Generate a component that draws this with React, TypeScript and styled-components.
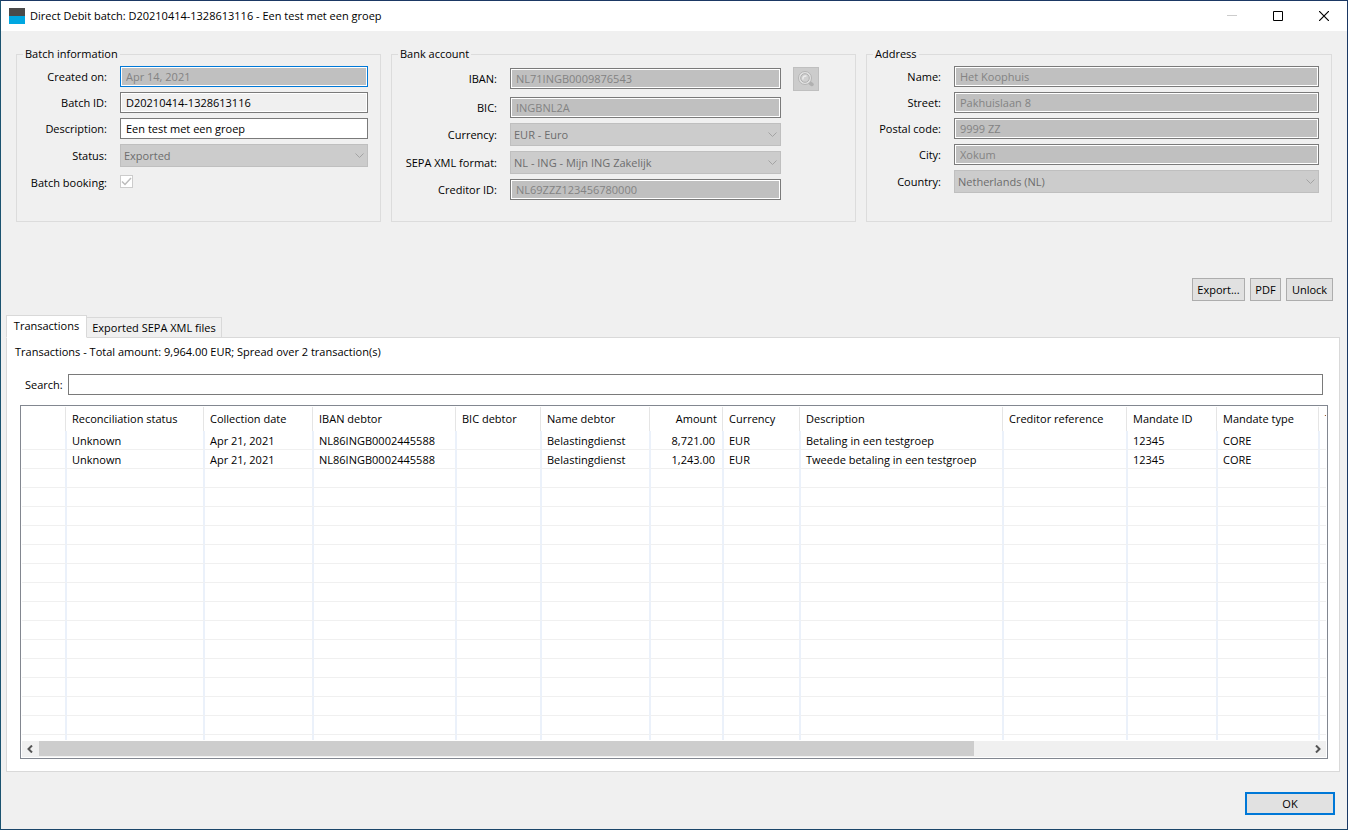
import React, { useId } from "react";
import styled, { createGlobalStyle } from "styled-components";

const GlobalStyle = createGlobalStyle`
  *, *::before, *::after { box-sizing: border-box; }
  body { margin: 0; }
  body, button, input, select {
    font-family: "Open Sans", "Noto Sans", sans-serif;
    font-size: 11px;
    line-height: 16px;
    color: #000;
  }
`;

const Window = styled.div`
  display: flex;
  flex-direction: column;
  height: 100vh;
  min-height: 560px;
  background: #f0f0f0;
  border: 1px solid #1b3864;
  border-left-color: #1b5370;
  border-bottom-color: #1b466a;
`;

const TitleBar = styled.header`
  display: flex;
  align-items: center;
  height: 30px;
  flex: none;
  padding-left: 8px;
  background: #fff;
`;

const Title = styled.h1`
  flex: 1;
  margin: 0 0 0 5px;
  font-size: 11px;
  font-weight: 400;
`;

const CaptionButton = styled.button`
  display: grid;
  place-items: center;
  width: 46px;
  height: 30px;
  padding: 0;
  border: 0;
  background: transparent;
`;

const Groups = styled.div`
  display: grid;
  grid-template-columns: 365fr 465fr 466fr;
  gap: 10px;
  flex: none;
  padding: 15px 15px 0;
`;

const Group = styled.fieldset`
  min-width: 0;
  min-height: 176px;
  margin: 0;
  padding: 4px 0 0;
  border: 1px solid #dcdcdc;
`;

const Legend = styled.legend`
  margin-left: 6px;
  padding: 0 2px;
`;

const Fields = styled.div<{ $label: number; $right: number }>`
  display: grid;
  grid-template-columns: ${(p) => p.$label}px minmax(0, 1fr);
  gap: 5px 13px;
  align-items: center;
  padding-right: ${(p) => p.$right}px;
`;

const FieldLabel = styled.label`
  text-align: right;
  white-space: nowrap;
`;

const TextInput = styled.input<{ $focus?: boolean }>`
  width: 100%;
  min-width: 0;
  height: 21px;
  padding: 0 5px;
  border: 1px solid ${(p) => (p.$focus ? "#0078d7" : "#7a7a7a")};
  border-radius: 0;
  box-shadow: inset 0 0 0 1px #fff;
  background: #fff;
  outline: 0;
  &:read-only { background: #f0f0f0; }
  &:disabled { background: #c0c0c0; color: #838383; }
`;

const SelectBox = styled.div`
  display: grid;
  align-items: center;
  & > * { grid-area: 1 / 1; }
  & > svg { justify-self: end; margin-right: 4px; pointer-events: none; }
`;

const SelectInput = styled.select`
  appearance: none;
  width: 100%;
  height: 23px;
  padding: 0 20px 0 3px;
  border: 1px solid #bfbfbf;
  border-radius: 0;
  background: #ccc;
  &:disabled { color: #6d6d6d; opacity: 1; }
`;

const CheckCell = styled.div`
  display: grid;
  align-items: start;
  height: 21px;
  padding-top: 3px;
  & > * { grid-area: 1 / 1; }
  & > svg { pointer-events: none; }
`;

const CheckInput = styled.input`
  appearance: none;
  width: 13px;
  height: 13px;
  margin: 0;
  border: 1px solid #ccc;
  background: #fff;
`;

const LookupRow = styled.div`
  display: flex;
  align-items: center;
  gap: 12px;
  height: 25px;
  margin-right: -38px;
  margin-bottom: 1px;
`;

const LookupButton = styled.button`
  display: grid;
  place-items: center;
  flex: none;
  width: 26px;
  height: 24px;
  padding: 0;
  border: 1px solid #bfbfbf;
  background: #ccc;
`;

const Actions = styled.div`
  display: flex;
  justify-content: flex-end;
  gap: 5px;
  flex: none;
  padding: 56px 14px 14px;
`;

const PushButton = styled.button<{ $width: number; $primary?: boolean }>`
  width: ${(p) => p.$width}px;
  height: 23px;
  padding: 0;
  border: ${(p) => (p.$primary ? "2px solid #0078d7" : "1px solid #adadad")};
  background: #e1e1e1;
  white-space: nowrap;
`;

const TabList = styled.div`
  display: flex;
  align-items: flex-end;
  flex: none;
  padding-left: 5px;
`;

const Tab = styled.button<{ $active?: boolean; $width: number }>`
  position: relative;
  z-index: ${(p) => (p.$active ? 1 : 0)};
  width: ${(p) => p.$width}px;
  height: ${(p) => (p.$active ? 23 : 21)}px;
  margin-bottom: -1px;
  padding: ${(p) => (p.$active ? "0 0 2px" : "0")};
  border: 1px solid #d9d9d9;
  border-left-width: ${(p) => (p.$active ? 1 : 0)}px;
  border-bottom-color: ${(p) => (p.$active ? "#fff" : "#d9d9d9")};
  background: ${(p) => (p.$active ? "#fff" : "#f0f0f0")};
  white-space: nowrap;
`;

const Panel = styled.main`
  display: flex;
  flex-direction: column;
  flex: 1;
  min-height: 0;
  margin: 0 7px 0 5px;
  padding: 6px 11px 12px 13px;
  border: 1px solid #d9d9d9;
  background: #fff;
`;

const Summary = styled.p`
  margin: 0 0 14px -5px;
`;

const SearchRow = styled.div`
  display: flex;
  align-items: center;
  gap: 5px;
  flex: none;
  margin: 0 5px 10px 5px;
`;

const SearchLabel = styled.label`
  flex: none;
  width: 38px;
  white-space: nowrap;
`;

const TableFrame = styled.div`
  display: flex;
  flex-direction: column;
  flex: 1;
  min-height: 0;
  padding: 1px;
  border: 1px solid #828790;
`;

const Viewport = styled.div`
  flex: 1;
  min-height: 0;
  overflow: hidden;
`;

const Table = styled.table`
  width: 1771px;
  table-layout: fixed;
  border-collapse: separate;
  border-spacing: 0;
`;

const HeadCell = styled.th<{ $right?: boolean }>`
  height: 24px;
  padding: 0 7px 0 5px;
  font-weight: 400;
  text-align: ${(p) => (p.$right ? "right" : "left")};
  white-space: nowrap;
  box-shadow: inset -1px 0 0 #fff, inset -2px 0 0 #e5e5e5;
`;

const Cell = styled.td<{ $right?: boolean }>`
  height: 19px;
  padding: 2px 7px 0 5px;
  border-right: 2px solid #ebf1fa;
  border-bottom: 1px solid #f0f0f0;
  line-height: 16px;
  text-align: ${(p) => (p.$right ? "right" : "left")};
  white-space: nowrap;
`;

const ScrollBar = styled.div`
  display: grid;
  grid-template-columns: 17px minmax(0, 1fr) 17px;
  flex: none;
  height: 16px;
  margin-top: 1px;
  background: #f0f0f0;
`;

const ScrollArrow = styled.button`
  display: grid;
  place-items: center;
  padding: 0;
  border: 0;
  background: transparent;
`;

const Thumb = styled.div`
  width: 73.6%;
  height: 15px;
  background: #cdcdcd;
`;

const Footer = styled.footer`
  display: flex;
  justify-content: flex-end;
  flex: none;
  padding: 20px 12px 14px;
`;

const Chevron = () => (
  <svg width="9" height="5" viewBox="0 0 9 5" fill="none" stroke="#a3a3a3">
    <path d="M.5.5l4 4 4-4" />
  </svg>
);

const Magnifier = () => (
  <svg width="16" height="16" viewBox="0 0 16 16" fill="none">
    <path d="M12 12l2 1.500" stroke="#b0b0b0" strokeWidth="3.500" strokeLinecap="round" />
    <circle cx="7" cy="7" r="6.500" fill="#e2e2e2" stroke="#b4b4b4" />
    <circle cx="7" cy="7" r="4.300" fill="#d0d0d0" stroke="#b0b0b0" />
    <path d="M5 8.500C4.500 6 6 4.800 8.500 5" stroke="#ececec" strokeWidth="1.500" />
  </svg>
);

function TextField({ label, value, mode, focus }: { label: string; value: string; mode?: "disabled" | "readonly"; focus?: boolean }) {
  const id = useId();
  return (
    <>
      <FieldLabel htmlFor={id}>{label}</FieldLabel>
      <TextInput id={id} defaultValue={value} disabled={mode === "disabled"} readOnly={mode === "readonly"} $focus={focus} />
    </>
  );
}

function SelectField({ label, value }: { label: string; value: string }) {
  const id = useId();
  return (
    <>
      <FieldLabel htmlFor={id}>{label}</FieldLabel>
      <SelectBox>
        <SelectInput id={id} disabled defaultValue={value}>
          <option>{value}</option>
        </SelectInput>
        <Chevron />
      </SelectBox>
    </>
  );
}

const columns = [
  { title: "", width: 45 },
  { title: "Reconciliation status", width: 138 },
  { title: "Collection date", width: 109 },
  { title: "IBAN debtor", width: 143 },
  { title: "BIC debtor", width: 85 },
  { title: "Name debtor", width: 109 },
  { title: "Amount", width: 73, right: true },
  { title: "Currency", width: 77 },
  { title: "Description", width: 203 },
  { title: "Creditor reference", width: 124 },
  { title: "Mandate ID", width: 90 },
  { title: "Mandate type", width: 102 },
  { title: "T" },
];

const transactions = [
  ["", "Unknown", "Apr 21, 2021", "NL86INGB0002445588", "", "Belastingdienst", "8,721.00", "EUR", "Betaling in een testgroep", "", "12345", "CORE"],
  ["", "Unknown", "Apr 21, 2021", "NL86INGB0002445588", "", "Belastingdienst", "1,243.00", "EUR", "Tweede betaling in een testgroep", "", "12345", "CORE"],
];

const rows: string[][] = [...transactions, ...Array.from({ length: 60 }, () => [] as string[])];

export default function App() {
  return (
    <>
      <GlobalStyle />
      <Window>
        <TitleBar>
          <svg width="16" height="16" viewBox="0 0 16 16">
            <path d="M0 0h16v8H0z" fill="#4a4a4a" />
            <path d="M0 8h16v8H0z" fill="#00a7e1" />
          </svg>
          <Title>Direct Debit batch: D20210414-1328613116 - Een test met een groep</Title>
          <CaptionButton aria-label="Minimize" disabled>
            <svg width="10" height="10" stroke="#ccc"><path d="M0 4.500h10" /></svg>
          </CaptionButton>
          <CaptionButton aria-label="Maximize">
            <svg width="10" height="10" fill="none" stroke="#000"><path d="M.5.5h9v9h-9z" /></svg>
          </CaptionButton>
          <CaptionButton aria-label="Close">
            <svg width="10" height="10" stroke="#000" strokeWidth="1.200"><path d="M0 0l10 10M10 0L0 10" /></svg>
          </CaptionButton>
        </TitleBar>

        <Groups>
          <Group>
            <Legend>Batch information</Legend>
            <Fields $label={90} $right={12}>
              <TextField label="Created on:" value="Apr 14, 2021" mode="disabled" focus />
              <TextField label="Batch ID:" value="D20210414-1328613116" mode="readonly" />
              <TextField label="Description:" value="Een test met een groep" />
              <SelectField label="Status:" value="Exported" />
              <FieldLabel htmlFor="booking">Batch booking:</FieldLabel>
              <CheckCell>
                <CheckInput id="booking" type="checkbox" defaultChecked disabled />
                <svg width="13" height="13" fill="none" stroke="#bcbcbc" strokeWidth="1.500">
                  <path d="M2 6.500l3 3 6-6.500" />
                </svg>
              </CheckCell>
            </Fields>
          </Group>
          <Group>
            <Legend>Bank account</Legend>
            <Fields $label={105} $right={74}>
              <FieldLabel htmlFor="iban">IBAN:</FieldLabel>
              <LookupRow>
                <TextInput id="iban" defaultValue="NL71INGB0009876543" disabled />
                <LookupButton aria-label="Look up account" disabled>
                  <Magnifier />
                </LookupButton>
              </LookupRow>
              <TextField label="BIC:" value="INGBNL2A" mode="disabled" />
              <SelectField label="Currency:" value="EUR - Euro" />
              <SelectField label="SEPA XML format:" value="NL - ING - Mijn ING Zakelijk" />
              <TextField label="Creditor ID:" value="NL69ZZZ123456780000" mode="disabled" />
            </Fields>
          </Group>
          <Group>
            <Legend>Address</Legend>
            <Fields $label={74} $right={12}>
              <TextField label="Name:" value="Het Koophuis" mode="disabled" />
              <TextField label="Street:" value="Pakhuislaan 8" mode="disabled" />
              <TextField label="Postal code:" value="9999 ZZ" mode="disabled" />
              <TextField label="City:" value="Xokum" mode="disabled" />
              <SelectField label="Country:" value="Netherlands (NL)" />
            </Fields>
          </Group>
        </Groups>

        <Actions>
          <PushButton $width={53}>Export...</PushButton>
          <PushButton $width={31}>PDF</PushButton>
          <PushButton $width={47}>Unlock</PushButton>
        </Actions>

        <TabList role="tablist">
          <Tab role="tab" aria-selected $active $width={81}>Transactions</Tab>
          <Tab role="tab" aria-selected={false} $width={135}>Exported SEPA XML files</Tab>
        </TabList>
        <Panel>
          <Summary>Transactions - Total amount: 9,964.00 EUR; Spread over 2 transaction(s)</Summary>
          <SearchRow>
            <SearchLabel htmlFor="search">Search:</SearchLabel>
            <TextInput id="search" type="text" />
          </SearchRow>
          <TableFrame>
            <Viewport>
              <Table>
                <colgroup>
                  {columns.map((c, i) => (
                    <col key={i} width={c.width} />
                  ))}
                </colgroup>
                <thead>
                  <tr>
                    {columns.map((c, i) => (
                      <HeadCell key={i} $right={c.right}>{c.title}</HeadCell>
                    ))}
                  </tr>
                </thead>
                <tbody>
                  {rows.map((row, r) => (
                    <tr key={r}>
                      {columns.map((c, i) => (
                        <Cell key={i} $right={c.right}>{row[i]}</Cell>
                      ))}
                    </tr>
                  ))}
                </tbody>
              </Table>
            </Viewport>
            <ScrollBar>
              <ScrollArrow aria-label="Scroll left">
                <svg width="7" height="8" fill="none" stroke="#555" strokeWidth="2"><path d="M5 .5L1.500 4 5 7.500" /></svg>
              </ScrollArrow>
              <Thumb />
              <ScrollArrow aria-label="Scroll right">
                <svg width="7" height="8" fill="none" stroke="#555" strokeWidth="2"><path d="M2 .5L5.500 4 2 7.500" /></svg>
              </ScrollArrow>
            </ScrollBar>
          </TableFrame>
        </Panel>

        <Footer>
          <PushButton $width={90} $primary>OK</PushButton>
        </Footer>
      </Window>
    </>
  );
}
